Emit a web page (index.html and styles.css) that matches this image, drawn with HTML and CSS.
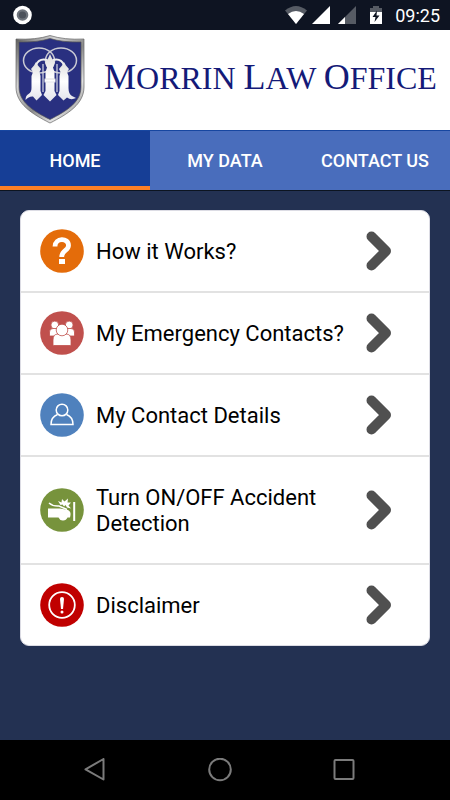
FILE: index.html
```html
<!DOCTYPE html>
<html lang="en">
<head>
<meta charset="utf-8">
<meta name="viewport" content="width=device-width, initial-scale=1">
<title>Morrin Law Office</title>
<link rel="stylesheet" href="styles.css">
</head>
<body>
<div class="status">
  <svg class="status-app" width="20" height="20" viewBox="0 0 20 20" aria-hidden="true"><circle cx="10.500" cy="10" r="9.300" fill="#fff"/><circle cx="10.500" cy="10" r="5.800" fill="#6e747c"/><circle cx="10.500" cy="10" r="3.600" fill="#4c525b"/></svg>
  <svg width="98" height="20" viewBox="0 0 98 20" aria-hidden="true">
    <path d="M0 5.500Q11 -3.500 22 5.500L11 19Z" fill="#565b64"/><path d="M3 9Q11 3 19 9L11 19Z" fill="#fff"/>
    <path d="M45 1V19H27Z" fill="#fff"/>
    <path d="M71 1V19H53Z" fill="#565b64"/><path d="M60 12V19H53Z" fill="#fff"/>
    <path d="M85 3h3V1h6v2h3v5H85Z" fill="#565b64"/><path d="M85 7h12v12H85Z" fill="#fff"/><path d="M92 5.500L87.500 12H90.500L89.500 17L94.500 10.500H91.500Z" fill="#0e1422"/>
  </svg>
  <span class="clock">09:25</span>
</div>
<header class="brand">
  <svg class="shield" width="74" height="92" viewBox="0 0 74 92" aria-hidden="true">
    <defs><linearGradient id="metal" x1="0" y1="0" x2="1" y2="1"><stop offset="0" stop-color="#555"/><stop offset=".3" stop-color="#d5d5d5"/><stop offset=".55" stop-color="#8b8b8b"/><stop offset=".75" stop-color="#e2e2e2"/><stop offset="1" stop-color="#666"/></linearGradient>
    <linearGradient id="silver" x1="0" y1="0" x2="0" y2="1"><stop offset="0" stop-color="#ddd"/><stop offset=".5" stop-color="#fff"/><stop offset="1" stop-color="#e4e4ec"/></linearGradient></defs>
    <path d="M2 5Q22 6 36 1.500Q50 6 70 5V53C70 70 54 80 36 89C18 80 2 70 2 53Z" fill="url(#metal)" stroke="#666" stroke-width=".7"/>
    <path d="M5 8Q23 8.500 36 4.500Q49 8.500 67 8V53C67 68 53 77 36 85.500C19 77 5 68 5 53Z" fill="#293080" stroke="#555" stroke-width=".7"/>
    <g fill="none" stroke="#c8c9d3" stroke-width="1.500"><ellipse cx="25" cy="26.500" rx="15.500" ry="12.500"/><ellipse cx="47" cy="26.500" rx="15.500" ry="12.500"/></g>
    <g fill="url(#silver)">
      <path d="M36 20L38 24.500L41 28L39 33.500L40.500 38V57L42.500 61L36 67.500L29.500 61L31.500 57V38L33 33.500L31 28L34 24.500Z"/>
      <path d="M22 28L24 31.500L27 35L25.500 38L26.500 42V57L28 61L22.500 66.500L19 62.500Q15 62 11.500 66Q11.500 61.500 14.500 60Q17.500 58.500 17.500 54V42L19 38L17 35L20 31.500Z"/>
      <path d="M50 28L52 31.500L55 35L53 38L54.500 42V54Q54.500 60 58 62L62 64Q57 66.500 53 63.500L49.500 66.500L44 61L45.500 57V42L46.500 38L45 35L48 31.500Z"/>
      <path d="M30.500 44.500h11v4h-11Z"/>
    </g>
    <path d="M22 31Q25 24 33 26M50 31Q47 24 39 26" fill="none" stroke="#eee" stroke-width="2"/>
    <path d="M29 30V58M43 30V58" fill="none" stroke="#d8d9e5" stroke-width="1.200"/>
  </svg>
  <h1 class="name"><span class="cap">M</span>ORRIN <span class="cap">L</span>AW <span class="cap">O</span>FFICE</h1>
</header>
<nav class="tabs">
  <a class="tab tab-active" href="#home" aria-current="page">HOME</a>
  <a class="tab" href="#data">MY DATA</a>
  <a class="tab" href="#contact">CONTACT US</a>
</nav>
<main class="content">
  <ul class="menu">
    <li><button class="row" type="button">
      <svg class="icon" viewBox="0 0 44 44" aria-hidden="true"><circle cx="22" cy="22" r="21.800" fill="#e46c0a"/><path d="M15 17.500C15 8.500 28.500 8.500 28.500 16.500C28.500 22 21.700 21 21.700 28" fill="none" stroke="#fff" stroke-width="4.800"/><path d="M19 30h6v5h-6Z" fill="#fff"/></svg>
      <span class="label">How it Works?</span>
      <svg class="chevron" viewBox="0 0 26 40" aria-hidden="true"><path d="M5.500 5.500L20 20L5.500 34.500"/></svg>
    </button></li>
    <li><button class="row" type="button">
      <svg class="icon" viewBox="0 0 44 44" aria-hidden="true"><circle cx="22" cy="22" r="21.800" fill="#c0504d"/><g fill="#fff" stroke="#c0504d" stroke-width=".8"><circle cx="14.800" cy="14" r="3.900"/><circle cx="29.200" cy="14" r="3.900"/><path d="M9.500 25V21Q9.500 17.500 13 17.500H18V25ZM34.500 25V21Q34.500 17.500 31 17.500H26V25Z"/><path d="M13 34V29Q13 23 18 23H26Q31 23 31 29V34Q31 34.500 30 34.500H14Q13 34.500 13 34Z"/><circle cx="22" cy="19" r="5.800"/></g></svg>
      <span class="label">My Emergency Contacts?</span>
      <svg class="chevron" viewBox="0 0 26 40" aria-hidden="true"><path d="M5.500 5.500L20 20L5.500 34.500"/></svg>
    </button></li>
    <li><button class="row" type="button">
      <svg class="icon" viewBox="0 0 44 44" aria-hidden="true"><circle cx="22" cy="22" r="21.800" fill="#4f81bd"/><g fill="none" stroke="#fff" stroke-width="1.500"><circle cx="22" cy="17" r="5.800"/><path d="M17.500 21.500Q11 24 11 31.500H33Q33 24 26.500 21.500"/></g></svg>
      <span class="label">My Contact Details</span>
      <svg class="chevron" viewBox="0 0 26 40" aria-hidden="true"><path d="M5.500 5.500L20 20L5.500 34.500"/></svg>
    </button></li>
    <li><button class="row row-tall" type="button">
      <svg class="icon" viewBox="0 0 44 44" aria-hidden="true"><circle cx="22" cy="22" r="21.800" fill="#77933c"/><path d="M8 20.500H20L28 22Q31 23.500 30.500 27L30 29.500H27.500Q26 33 22.500 32.500Q19.500 32 18.500 29.500H8Z" fill="#fff"/><path d="M9 15Q13 18.500 19 18L27 21.500" fill="none" stroke="#fff" stroke-width="1.500"/><path d="M18 13L21.500 14.500L22 11L24.500 13.500L28 10.500L27.500 14.500L31 14.500L28.500 17.500L31 20.500L27 19.500L25.500 17L24 18.500L22.500 16.500L20.500 17Z" fill="#fff"/><path d="M33.200 14h2v19h-2Z" fill="#fff"/></svg>
      <span class="label">Turn ON/OFF Accident Detection</span>
      <svg class="chevron" viewBox="0 0 26 40" aria-hidden="true"><path d="M5.500 5.500L20 20L5.500 34.500"/></svg>
    </button></li>
    <li><button class="row" type="button">
      <svg class="icon" viewBox="0 0 44 44" aria-hidden="true"><circle cx="22" cy="22" r="21.800" fill="#c00000"/><circle cx="22" cy="22" r="12.800" fill="none" stroke="#fff" stroke-width="1.800"/><path d="M20 16Q20 14 22 14T24 16L23 26H21Z" fill="#fff"/><circle cx="22" cy="29" r="1.500" fill="#fff"/></svg>
      <span class="label">Disclaimer</span>
      <svg class="chevron" viewBox="0 0 26 40" aria-hidden="true"><path d="M5.500 5.500L20 20L5.500 34.500"/></svg>
    </button></li>
  </ul>
</main>
<footer class="navbar">
  <button class="nav-button" type="button" aria-label="Back"><svg width="24" height="24" viewBox="0 0 24 24"><path d="M19.500 1V21.500L1.500 11.300Z"/></svg></button>
  <button class="nav-button" type="button" aria-label="Home screen"><svg width="24" height="24" viewBox="0 0 24 24"><circle cx="12" cy="11.500" r="10.800"/></svg></button>
  <button class="nav-button" type="button" aria-label="Recent apps"><svg width="24" height="24" viewBox="0 0 24 24"><rect x="2.500" y="2" width="19" height="19" rx="1"/></svg></button>
</footer>
</body>
</html>
```
FILE: styles.css
```css
* { box-sizing: border-box; }

body {
  margin: 0;
  min-height: 100vh;
  display: flex;
  flex-direction: column;
  background: #233152;
  color: #000;
  font-family: Roboto, "Liberation Sans", sans-serif;
}

svg { display: block; flex: none; }

.status {
  display: flex;
  align-items: center;
  height: 30px;
  padding: 0 10px 0 12px;
  background: #0e1422;
  color: #fff;
}

.status-app { margin-right: auto; }

.clock {
  margin-left: 12px;
  font-size: 18px;
  font-weight: 400;
}

.brand {
  display: flex;
  align-items: center;
  gap: 16px;
  height: 100px;
  padding: 0 12px 0 14px;
  background: #fff;
}

.name {
  margin: 0;
  padding-bottom: 6px;
  color: #141a78;
  font-family: "Liberation Serif", serif;
  font-size: 32px;
  font-weight: 400;
  line-height: 40px;
  white-space: nowrap;
}

.cap { font-size: 36px; }

.tabs {
  display: grid;
  grid-template-columns: repeat(3, 1fr);
  height: 61px;
  background: #496dbc;
  border-top: 1px solid #1746a0;
  border-bottom: 1px solid #0c1420;
}

.tab {
  display: flex;
  align-items: center;
  justify-content: center;
  border-bottom: 4px solid transparent;
  padding-top: 4px;
  color: #fff;
  font-size: 18px;
  font-weight: 500;
  text-decoration: none;
  white-space: nowrap;
}

.tab-active {
  background: #163e96;
  border-bottom-color: #fc7f25;
}

.content {
  flex: 1;
  padding: 19px 20px;
}

.menu {
  margin: 0;
  padding: 0;
  list-style: none;
  background: #fff;
  border: 1px solid #dcdce4;
  border-radius: 9px;
  overflow: hidden;
}

.menu li + li { border-top: 2px solid #e2e2e2; }

.row {
  display: flex;
  align-items: center;
  width: 100%;
  min-height: 80px;
  padding: 0 37px 0 19px;
  border: 0;
  background: none;
  color: #000;
  font: 22px/26px Roboto, "Liberation Sans", sans-serif;
  text-align: left;
}

.row-tall { min-height: 106px; }

.icon {
  width: 44px;
  height: 44px;
}

.label {
  flex: 1;
  padding: 2px 0 0 12px;
}

.chevron {
  width: 26px;
  height: 40px;
}

.chevron path {
  fill: none;
  stroke: #505050;
  stroke-width: 10;
  stroke-linecap: round;
  stroke-linejoin: round;
}

.navbar {
  display: flex;
  justify-content: center;
  height: 60px;
  padding-right: 10px;
  background: #000;
}

.nav-button {
  display: flex;
  align-items: center;
  justify-content: center;
  width: 124px;
  padding: 0;
  border: 0;
  background: none;
}

.nav-button svg {
  fill: none;
  stroke: #7b7b7b;
  stroke-width: 2;
  stroke-linejoin: round;
}
```
